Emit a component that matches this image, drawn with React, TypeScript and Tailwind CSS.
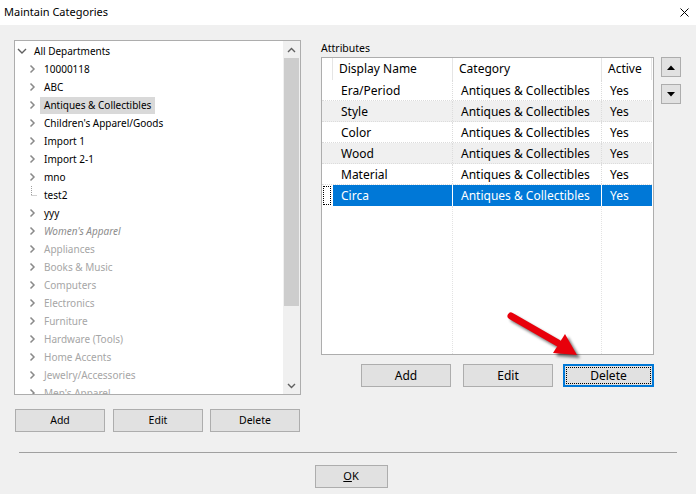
import React from "react";

const tree = [
  { name: "10000118", kind: "normal" },
  { name: "ABC", kind: "normal" },
  { name: "Antiques & Collectibles", kind: "selected" },
  { name: "Children's Apparel/Goods", kind: "normal" },
  { name: "Import 1", kind: "normal" },
  { name: "Import 2-1", kind: "normal" },
  { name: "mno", kind: "normal" },
  { name: "test2", kind: "leaf" },
  { name: "yyy", kind: "normal" },
  { name: "Women's Apparel", kind: "italic" },
  { name: "Appliances", kind: "gray" },
  { name: "Books & Music", kind: "gray" },
  { name: "Computers", kind: "gray" },
  { name: "Electronics", kind: "gray" },
  { name: "Furniture", kind: "gray" },
  { name: "Hardware (Tools)", kind: "gray" },
  { name: "Home Accents", kind: "gray" },
  { name: "Jewelry/Accessories", kind: "gray" },
  { name: "Men's Apparel", kind: "gray" },
];

const attributes = [
  { name: "Era/Period", striped: false },
  { name: "Style", striped: true },
  { name: "Color", striped: false },
  { name: "Wood", striped: true },
  { name: "Material", striped: false },
];

function Chevron() {
  return (
    <svg width="12" height="10" viewBox="0 0 12 10">
      <path d="M4.5 1.5 L8 5 L4.5 8.5" fill="none" stroke="#8a8a8a" strokeWidth="1.5" />
    </svg>
  );
}

function WinButton({ label, className }: { label: React.ReactNode; className: string }) {
  return (
    <div
      className={`h-[23px] flex items-center justify-center bg-[#e1e1e1] border border-[#adadad] text-black ${className}`}
    >
      {label}
    </div>
  );
}

function TreePanel() {
  return (
    <div className="w-[287px] h-[355px] bg-white border border-[#adadad] flex overflow-hidden">
      <div className="flex-1 pt-[1px] text-[10px] leading-none">
        <div className="h-[18px] flex items-center">
          <div className="w-[13px] flex justify-center">
            <svg width="10" height="8" viewBox="0 0 10 8">
              <path d="M1 2 L5 6 L9 2" fill="none" stroke="#606060" strokeWidth="1.4" />
            </svg>
          </div>
          <span className="ml-[2px] px-[4px] text-black">All Departments</span>
        </div>
        {tree.map((t) => (
          <div key={t.name} className="h-[18px] flex items-center pl-[11px]">
            <div className="w-[12px] h-[18px] flex items-center justify-center">
              {t.kind === "leaf" ? (
                <svg width="12" height="18" viewBox="0 0 12 18">
                  <path d="M5.5 0 V9.5 M5.5 9.5 H11" fill="none" stroke="#a0a0a0" strokeDasharray="1 1" />
                </svg>
              ) : (
                <Chevron />
              )}
            </div>
            <span
              className={`ml-[2px] px-[4px] h-[17px] flex items-center whitespace-nowrap ${
                t.kind === "selected"
                  ? "bg-[#d9d9d9] text-black"
                  : t.kind === "italic"
                  ? "italic text-[#8c8c8c]"
                  : t.kind === "gray"
                  ? "text-[#a6a6a6]"
                  : "text-black"
              }`}
            >
              {t.name}
            </span>
          </div>
        ))}
      </div>
      <div className="w-[17px] flex flex-col bg-[#f0f0f0]">
        <div className="h-[17px] flex items-center justify-center">
          <svg width="9" height="6" viewBox="0 0 9 6">
            <path d="M1 5 L4.5 1.5 L8 5" fill="none" stroke="#606060" strokeWidth="1.4" />
          </svg>
        </div>
        <div className="h-[248px] mx-[1px] bg-[#cdcdcd]" />
        <div className="flex-1" />
        <div className="h-[17px] flex items-center justify-center">
          <svg width="9" height="6" viewBox="0 0 9 6">
            <path d="M1 1 L4.5 4.5 L8 1" fill="none" stroke="#606060" strokeWidth="1.4" />
          </svg>
        </div>
      </div>
    </div>
  );
}

function AttributesTable() {
  return (
    <div className="w-[333px] h-[298px] bg-white border border-[#adadad] flex flex-col text-[12px] leading-none text-black">
      <div className="h-[22px] flex shrink-0">
        <div className="w-[11px] border-r border-[#e5e5e5]" />
        <div className="w-[120px] border-r border-[#e5e5e5] pl-[6px] flex items-center">Display Name</div>
        <div className="w-[149px] border-r border-[#e5e5e5] pl-[6px] flex items-center">Category</div>
        <div className="w-[50px] border-r border-[#e5e5e5] pl-[6px] flex items-center">Active</div>
      </div>
      {attributes.map((a) => (
        <div
          key={a.name}
          className={`h-[21px] flex shrink-0 w-[330px] border-b border-dotted border-[#dcdcdc] ${
            a.striped ? "bg-[#f0f0f0]" : "bg-white"
          }`}
        >
          <div className="w-[11px]" />
          <div className="w-[120px] border-r border-dotted border-[#dcdcdc] pl-[8px] pt-[1px] flex items-center">
            {a.name}
          </div>
          <div className="w-[149px] border-r border-dotted border-[#dcdcdc] pl-[8px] pt-[1px] flex items-center">
            Antiques &amp; Collectibles
          </div>
          <div className="w-[50px] pl-[8px] pt-[1px] flex items-center">Yes</div>
        </div>
      ))}
      <div className="h-[21px] flex shrink-0 w-[330px]">
        <div className="w-[11px] flex items-stretch py-[1px] pl-[1px] pr-[2px]">
          <div className="flex-1 border border-dotted border-black" />
        </div>
        <div className="w-[120px] border-r border-white bg-[#0078d7] text-white pl-[8px] flex items-center">Circa</div>
        <div className="w-[149px] border-r border-white bg-[#0078d7] text-white pl-[8px] flex items-center">
          Antiques &amp; Collectibles
        </div>
        <div className="w-[50px] bg-[#0078d7] text-white pl-[8px] flex items-center">Yes</div>
      </div>
      <div className="flex-1 flex w-[330px]">
        <div className="w-[11px]" />
        <div className="w-[120px] border-r border-dotted border-[#e3e3e3]" />
        <div className="w-[149px] border-r border-dotted border-[#e3e3e3]" />
      </div>
    </div>
  );
}

export default function App() {
  return (
    <div
      className="w-[696px] h-[494px] bg-[#f0f0f0] flex flex-col relative overflow-hidden text-black"
      style={{ fontFamily: '"Noto Sans", "Open Sans", sans-serif' }}
    >
      <div className="h-[25px] bg-white flex items-center justify-between pl-[4px] pr-[7px] text-[11px] shrink-0">
        <span>Maintain Categories</span>
        <svg width="9" height="9" viewBox="0 0 9 9">
          <path d="M0.5 0.5 L8.5 8.5 M8.5 0.5 L0.5 8.5" stroke="#000" strokeWidth="1" />
        </svg>
      </div>

      <div className="flex pt-[15px] pl-[14px]">
        <div className="flex flex-col">
          <TreePanel />
          <div className="flex mt-[14px] ml-[1px] text-[10.5px]">
            <WinButton label="Add" className="w-[90px]" />
            <WinButton label="Edit" className="w-[90px] ml-[8px]" />
            <WinButton label="Delete" className="w-[90px] ml-[7px]" />
          </div>
        </div>

        <div className="flex flex-col ml-[20px]">
          <div className="h-[17px] text-[10.5px] flex items-center">Attributes</div>
          <div className="flex">
            <AttributesTable />
            <div className="flex flex-col ml-[7px] gap-[7px]">
              <div className="w-[20px] h-[20px] bg-[#e1e1e1] border border-[#adadad] flex items-center justify-center">
                <svg width="8" height="5" viewBox="0 0 8 5">
                  <path d="M0 5 L4 0.5 L8 5 Z" fill="#000" />
                </svg>
              </div>
              <div className="w-[20px] h-[20px] bg-[#e1e1e1] border border-[#adadad] flex items-center justify-center">
                <svg width="8" height="5" viewBox="0 0 8 5">
                  <path d="M0 0 L4 4.5 L8 0 Z" fill="#000" />
                </svg>
              </div>
            </div>
          </div>
          <div className="flex mt-[9px] ml-[40px] text-[12px]">
            <WinButton label="Add" className="w-[90px]" />
            <WinButton label="Edit" className="w-[90px] ml-[12px]" />
            <div className="w-[91px] h-[23px] ml-[10px] border-2 border-[#0078d7] bg-[#e1e1e1] p-[1px]">
              <div className="h-full border border-dotted border-black flex items-center justify-center">Delete</div>
            </div>
          </div>
        </div>
      </div>

      <div className="mt-[20px] mx-[19px] h-px bg-[#a0a0a0]" />
      <div className="flex justify-center mt-[12px] pl-[6px] text-[11px]">
        <WinButton
          label={
            <span>
              <span className="underline">O</span>K
            </span>
          }
          className="w-[73px]"
        />
      </div>

      <svg className="absolute inset-0 pointer-events-none" width="696" height="494" viewBox="0 0 696 494">
        <defs>
          <filter id="sh" x="-20%" y="-20%" width="140%" height="140%">
            <feGaussianBlur stdDeviation="1.5" />
          </filter>
        </defs>
        <g transform="translate(3,3)" filter="url(#sh)" opacity="0.55">
          <line x1="511" y1="316" x2="558" y2="343" stroke="#000" strokeWidth="7" strokeLinecap="round" />
          <path d="M577 355 L553 353 L565 334 Z" fill="#000" />
        </g>
        <line x1="511" y1="316" x2="558" y2="343" stroke="#e8000b" strokeWidth="7" strokeLinecap="round" />
        <path d="M577 355 L553 353 L565 334 Z" fill="#e8000b" />
      </svg>
    </div>
  );
}
